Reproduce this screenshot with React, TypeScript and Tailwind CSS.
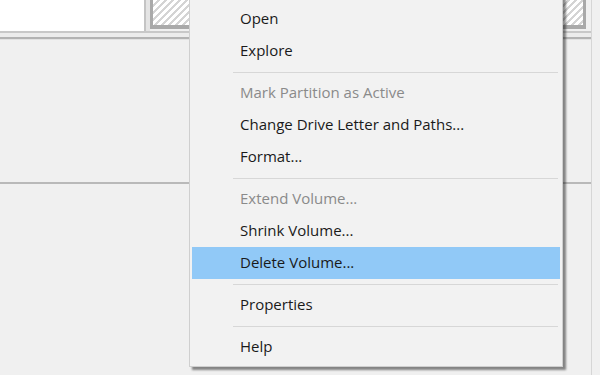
import React from "react";

type Item = { label: string; disabled?: boolean; active?: boolean } | "sep";

const items: Item[] = [
  { label: "Open" },
  { label: "Explore" },
  "sep",
  { label: "Mark Partition as Active", disabled: true },
  { label: "Change Drive Letter and Paths..." },
  { label: "Format..." },
  "sep",
  { label: "Extend Volume...", disabled: true },
  { label: "Shrink Volume..." },
  { label: "Delete Volume...", active: true },
  "sep",
  { label: "Properties" },
  "sep",
  { label: "Help" },
];

export default function App() {
  return (
    <div
      className="relative w-[600px] h-[375px] overflow-hidden bg-[#f0f0f0]"
      style={{ fontFamily: '"Open Sans", "Noto Sans", sans-serif' }}
    >
      {/* background disk view */}
      <div className="flex w-[592px] h-full flex-col border-r border-[#d6d6d6]">
        <div className="flex h-[31px]">
          <div className="w-[146px] h-[31px] bg-white border-r-2 border-[#c4c4c4]" />
          <div className="w-[4px] bg-[#e4e4e4]" />
          <div className="w-[436px] h-[29px] border-l-[3px] border-r-[3px] border-b-[4px] border-[#a9a9a9] bg-[repeating-linear-gradient(135deg,#ffffff_0px,#ffffff_3px,#d4d4d4_3px,#d4d4d4_5px)]" />
        </div>
        <div className="h-[2px] bg-[#c8c8c8]" />
        <div className="h-[4px] bg-[#ececec]" />
        <div className="h-[2px] bg-[#b3b3b3]" />
        <div className="h-[1px] bg-[#e2e2e2]" />
        <div className="h-[142px] bg-[#f0f0f0]" />
        <div className="h-[2px] bg-[#b9b9b9]" />
        <div className="flex-1 bg-[#f0f0f0]" />
      </div>

      {/* context menu */}
      <div className="absolute left-[189px] top-[-10px] w-[374px] border border-[#cfcfcf] bg-[#f2f2f2] pt-[12px] pb-[3px] px-[2px] shadow-[3px_3px_2px_rgba(0,0,0,0.45)]">
        {items.map((it, i) =>
          it === "sep" ? (
            <div key={i} className="h-[10px] flex items-center pl-[41px] pr-[2px]">
              <div className="h-[1px] w-full bg-[#d7d7d7]" />
            </div>
          ) : (
            <div
              key={i}
              className={`h-[32px] flex items-center pl-[48px] pb-[1px] text-[15px] font-medium ${
                it.active ? "bg-[#91c9f7]" : ""
              } ${it.disabled ? "text-[#8a8a8a]" : "text-[#1a1a1a]"}`}
            >
              {it.label}
            </div>
          )
        )}
      </div>
    </div>
  );
}
